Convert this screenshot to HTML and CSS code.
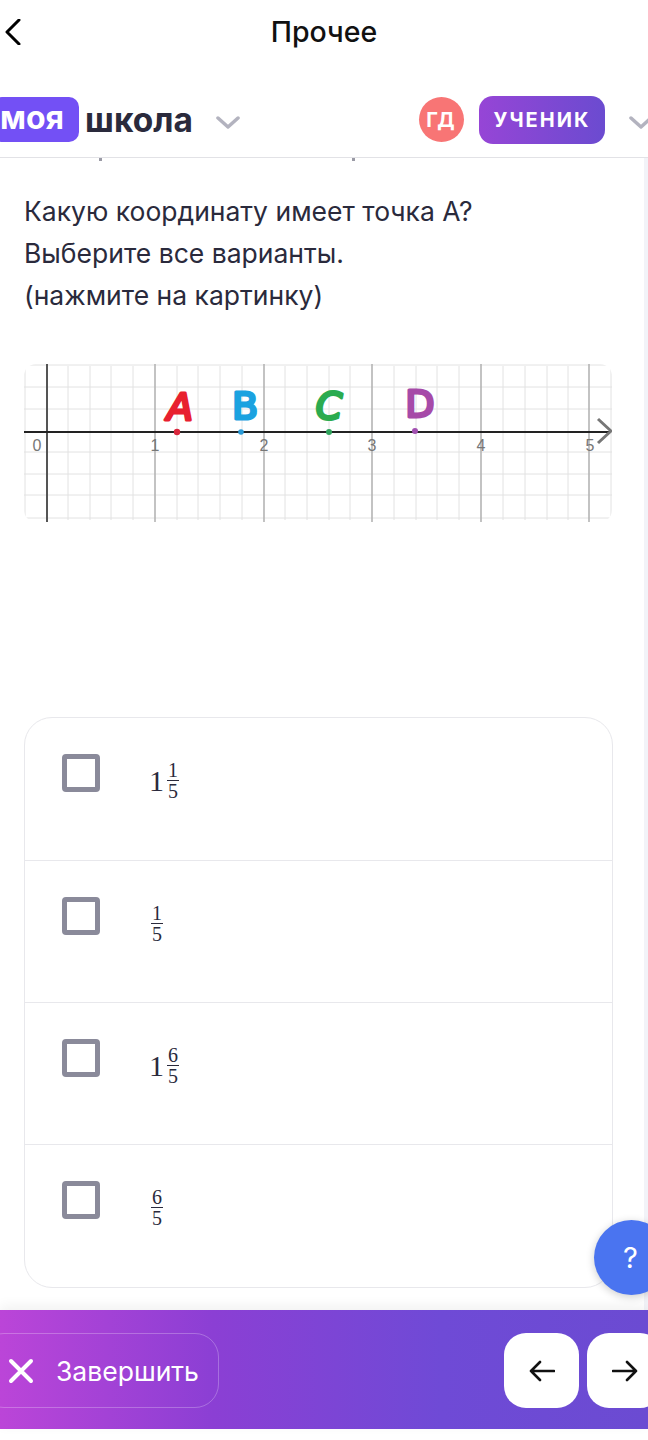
FILE: index.html
```html
<!DOCTYPE html>
<html>
<head>
    <title>Прочее</title>
    <meta name="viewport" content="width=device-width, initial-scale=1">
    <link rel="stylesheet" href="styles.css">
</head>
<body>
    <div class="topbar">
        <svg class="back" width="16" height="26" viewBox="0 0 16 26"><path d="M14 1 L2 13 L14 25" fill="none" stroke="#000" stroke-width="3" stroke-linecap="round" stroke-linejoin="round"/></svg>
        <div class="topbar-title">Прочее</div>
    </div>

    <header class="site-header">
        <div class="logo"><span class="logo-badge">моя</span><span class="logo-text">школа</span></div>
        <svg class="chevron chevron-logo" width="24" height="13" viewBox="0 0 24 13"><path d="M2 2 L12 11 L22 2" fill="none" stroke="#b3b3bf" stroke-width="3.5" stroke-linecap="round" stroke-linejoin="round"/></svg>
        <div class="avatar">ГД</div>
        <div class="role">УЧЕНИК</div>
        <svg class="chevron chevron-role" width="24" height="13" viewBox="0 0 24 13"><path d="M2 2 L12 11 L22 2" fill="none" stroke="#b3b3bf" stroke-width="3.5" stroke-linecap="round" stroke-linejoin="round"/></svg>
    </header>

    <main class="content">
        <p class="question">Какую координату имеет точка А?<br>Выберите все варианты.<br>(нажмите на картинку)</p>

        <svg class="graph" width="588" height="158" viewBox="24 364 588 158">
            <g class="grid-minor">
                <path d="M25 366V520M68 366V520M90 366V520M111 366V520M133 366V520M177 366V520M198 366V520M220 366V520M242 366V520M285 366V520M307 366V520M329 366V520M350 366V520M394 366V520M416 366V520M437 366V520M459 366V520M503 366V520M525 366V520M547 366V520M568 366V520M611 366V520"/>
                <path d="M24 365H612M24 387H612M24 409H612M24 452H612M24 474H612M24 495H612M24 518H612"/>
            </g>
            <path class="grid-major" d="M155 364V522M264 364V522M372 364V522M481 364V522M589 364V522"/>
            <path class="axis-y" d="M47 364V522"/>
            <path class="axis-x" d="M24 432H610"/>
            <path class="axis-arrow" d="M598 419L611 431L598 443"/>
            <g class="graph-nums">
                <text x="37" y="451">0</text>
                <text x="155" y="451">1</text>
                <text x="264" y="451">2</text>
                <text x="372" y="451">3</text>
                <text x="481" y="451">4</text>
                <text x="590" y="451">5</text>
            </g>
            <circle cx="177" cy="432" r="3.2" fill="#d9263c"/>
            <circle cx="241" cy="432" r="2.8" fill="#2a9bd8"/>
            <circle cx="329" cy="432" r="3" fill="#2fa35c"/>
            <circle cx="415" cy="431" r="3" fill="#a14fb0"/>
            <g class="graph-letters">
                <text x="180" y="420" fill="#e8202f" stroke="#e8202f" font-style="italic">A</text>
                <text x="245" y="419" fill="#1ba2e0" stroke="#1ba2e0">B</text>
                <text x="329" y="419" fill="#2bab4f" stroke="#2bab4f" font-style="italic">C</text>
                <text x="420" y="417" fill="#a64aa8" stroke="#a64aa8">D</text>
            </g>
        </svg>

        <div class="answers">
            <div class="answer">
                <span class="checkbox"></span>
                <span class="math"><span class="whole">1</span><span class="frac"><span>1</span><span class="den">5</span></span></span>
            </div>
            <div class="answer">
                <span class="checkbox"></span>
                <span class="math"><span class="frac"><span>1</span><span class="den">5</span></span></span>
            </div>
            <div class="answer">
                <span class="checkbox"></span>
                <span class="math"><span class="whole">1</span><span class="frac"><span>6</span><span class="den">5</span></span></span>
            </div>
            <div class="answer">
                <span class="checkbox"></span>
                <span class="math"><span class="frac"><span>6</span><span class="den">5</span></span></span>
            </div>
        </div>

        <div class="help">?</div>
    </main>

    <footer class="test-footer">
        <div class="finish">
            <svg width="26" height="26" viewBox="0 0 26 26"><path d="M3 3L23 23M23 3L3 23" fill="none" stroke="#fff" stroke-width="4" stroke-linecap="round"/></svg>
            <span>Завершить</span>
        </div>
        <div class="nav-btn">
            <svg width="26" height="22" viewBox="0 0 26 22"><path d="M25 11H2M11 2L2 11L11 20" fill="none" stroke="#111" stroke-width="2.6" stroke-linecap="round" stroke-linejoin="round"/></svg>
        </div>
        <div class="nav-btn">
            <svg width="26" height="22" viewBox="0 0 26 22"><path d="M1 11H24M15 2L24 11L15 20" fill="none" stroke="#111" stroke-width="2.6" stroke-linecap="round" stroke-linejoin="round"/></svg>
        </div>
    </footer>
</body>
</html>
```

FILE: styles.css
```css
* {
    margin: 0;
    padding: 0;
    box-sizing: border-box;
}

html, body {
    overflow: hidden;
}

body {
    width: 648px;
    height: 1440px;
    font-family: Inter, 'Liberation Sans', sans-serif;
    background: white;
    color: #2a2a3c;
}

.topbar {
    position: relative;
    height: 64px;
    display: flex;
    align-items: center;
    justify-content: center;
}

.back {
    position: absolute;
    left: 5px;
    top: 19px;
}

.topbar-title {
    font-size: 28.5px;
    font-weight: 500;
    color: #111;
    margin-bottom: 2px;
}

.site-header {
    height: 94px;
    display: flex;
    align-items: center;
    border-bottom: 1px solid #e2e2e6;
    padding-top: 31px;
    padding-bottom: 13px;
}

.logo {
    display: flex;
    align-items: center;
    flex-shrink: 0;
    margin-left: -8px;
}

.logo-badge {
    background: #7350f5;
    color: white;
    font-size: 32px;
    font-weight: 700;
    line-height: 42px;
    height: 45px;
    padding: 0 15px 0 8px;
    border-radius: 10px;
}

.logo-text {
    margin-left: 6px;
    font-size: 33.5px;
    font-weight: 700;
    color: #2a2a3c;
}

.chevron-logo {
    margin-left: 23px;
    margin-top: 6px;
    flex-shrink: 0;
}

.avatar {
    margin-left: 179px;
    width: 45px;
    height: 45px;
    flex-shrink: 0;
    border-radius: 50%;
    background: #f87575;
    color: white;
    font-size: 20px;
    font-weight: 700;
    letter-spacing: 2px;
    display: flex;
    align-items: center;
    justify-content: center;
}

.role {
    margin-left: 15px;
    width: 126px;
    height: 48px;
    flex-shrink: 0;
    border-radius: 14px;
    background: linear-gradient(90deg, #9645d6, #6b4bd0);
    color: white;
    font-size: 20px;
    font-weight: 700;
    letter-spacing: 2px;
    display: flex;
    align-items: center;
    justify-content: center;
}

.chevron-role {
    margin-left: 24px;
    margin-top: 6px;
    flex-shrink: 0;
}

.content {
    position: relative;
    height: 1152px;
    padding: 32px 32px 0 24px;
    border-right: 4px solid #f2f3f8;
    background:
        linear-gradient(#9a9aa5, #9a9aa5) 99px 0 / 3px 3px no-repeat,
        linear-gradient(#9a9aa5, #9a9aa5) 352px 0 / 3px 3px no-repeat;
}

.question {
    font-size: 26.5px;
    line-height: 42px;
    color: #2a2a3c;
}

.graph {
    display: block;
    margin-top: 48px;
    border-radius: 12px;
}

.grid-minor path {
    fill: none;
    stroke: #e2e2e2;
    stroke-width: 1;
}

.grid-major {
    fill: none;
    stroke: #b4b4b4;
    stroke-width: 1.6;
}

.axis-y {
    fill: none;
    stroke: #555;
    stroke-width: 2;
}

.axis-x {
    fill: none;
    stroke: #222;
    stroke-width: 2;
}

.axis-arrow {
    fill: none;
    stroke: #777;
    stroke-width: 3;
}

.graph-nums text {
    font-family: 'Liberation Sans', sans-serif;
    font-size: 16px;
    fill: #777;
    text-anchor: middle;
}

.graph-letters text {
    font-family: 'DejaVu Sans', sans-serif;
    font-size: 38px;
    stroke-width: 3;
    stroke-linejoin: round;
    text-anchor: middle;
}

.answers {
    margin-top: 195px;
    width: 589px;
    height: 571px;
    border: 1px solid #e8e8ec;
    border-radius: 28px;
    display: flex;
    flex-direction: column;
}

.answer {
    flex: 0 0 142px;
    display: flex;
    align-items: flex-start;
    padding: 36px 0 0 37px;
}

.answer:last-child {
    flex: 1;
}

.answer + .answer {
    border-top: 1px solid #e8e8ec;
}

.checkbox {
    width: 38px;
    height: 38px;
    border: 5px solid #8a8a9a;
    border-radius: 4px;
    flex-shrink: 0;
}

.math {
    margin: 6px 0 0 50px;
    display: flex;
    align-items: center;
    gap: 2px;
    font-family: 'Liberation Serif', serif;
    color: #2a2a3c;
}

.whole {
    font-size: 30px;
    line-height: 40px;
    margin-left: -1px;
}

.frac {
    display: flex;
    flex-direction: column;
    align-items: center;
    width: 12px;
    margin-left: 1px;
    font-size: 20px;
    line-height: 20px;
}

.den {
    align-self: stretch;
    text-align: center;
    border-top: 1px solid #2a2a3c;
}

.help {
    position: absolute;
    left: 594px;
    top: 1062px;
    width: 75px;
    height: 75px;
    border-radius: 50%;
    background: #4a74f0;
    color: white;
    font-size: 29px;
    line-height: 75px;
    padding-left: 29px;
    box-shadow: 0 2px 8px rgba(0,0,0,0.2);
}

.test-footer {
    height: 119px;
    padding-top: 2px;
    display: flex;
    align-items: center;
    background: linear-gradient(90deg, #bb45d8 0%, #8b3fd4 33%, #6f4ad6 68%, #6b4bd2 100%);
    box-shadow: 0 -4px 12px rgba(0,0,0,0.06);
    position: relative;
}

.finish {
    margin-left: -20px;
    width: 239px;
    height: 75px;
    border: 1px solid rgba(255,255,255,0.25);
    border-radius: 24px;
    display: flex;
    align-items: center;
    padding-left: 27px;
    gap: 22px;
    color: white;
    font-size: 26.5px;
    font-weight: 400;
    flex-shrink: 0;
}

.nav-btn {
    width: 75px;
    height: 75px;
    background: white;
    border-radius: 22px;
    display: flex;
    align-items: center;
    justify-content: center;
    flex-shrink: 0;
}

.finish + .nav-btn {
    margin-left: 285px;
}

.nav-btn + .nav-btn {
    margin-left: 8px;
}
```
